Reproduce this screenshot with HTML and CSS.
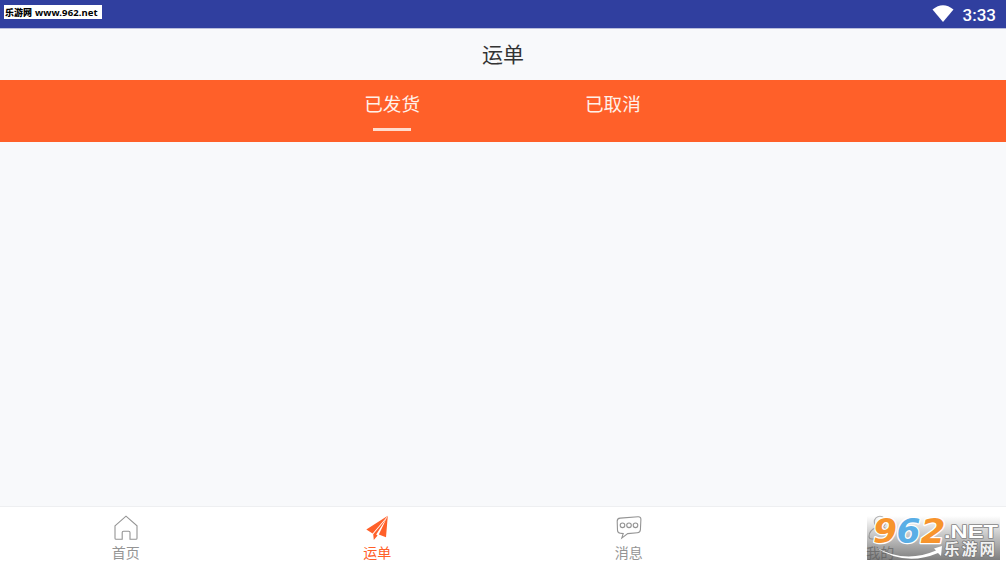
FILE: index.html
```
<!DOCTYPE html>
<html lang="zh-CN">
<head>
    <meta charset="UTF-8">
    <meta name="viewport" content="width=device-width, initial-scale=1.0">
    <title>运单</title>
    <link rel="stylesheet" href="styles.css">
</head>
<body>
    <div class="status-bar">
        <div class="site-tag"><span class="site-name">乐游网</span><span>www.962.net</span></div>
        <div class="status-right">
            <svg class="wifi" viewBox="0 0 22 18"><path d="M0.5 4.5Q11-4 21.5 4.5L11 17Z" fill="#fff"/></svg>
            <span class="clock">3:33</span>
        </div>
    </div>

    <h1 class="title">运单</h1>

    <div class="tabs">
        <a class="tab active">已发货</a>
        <a class="tab">已取消</a>
    </div>

    <div class="content"></div>

    <div class="nav">
        <a class="nav-item">
            <svg class="icon" viewBox="0 0 26 26"><path d="M2 10.8 13 1.2 24 10.8V23.2Q24 24.3 22.9 24.3H17V17.5Q17 16.2 15.7 16.2H10.5Q9.2 16.2 9.2 17.5V24.3H3.1Q2 24.3 2 23.2Z"/></svg>
            <span>首页</span>
        </a>
        <a class="nav-item active">
            <svg class="icon" viewBox="0 0 26 26"><path d="M23.8 0.8 2.3 14.6 8.6 18.4ZM23.8 0.8 22 22.2 14.8 19.6ZM22.4 3.6 9.2 19.2 9.8 25 13.6 20.4 12.2 19.6Z"/></svg>
            <span>运单</span>
        </a>
        <a class="nav-item">
            <svg class="icon" viewBox="0 0 26 26"><path d="M4.2 3.1 22 1.7Q25 1.5 24.9 4.5L24.4 14.7Q24.2 17.6 21.4 17.8L11.7 18.6 5.8 23.1 7.2 18.6 4.4 18.3Q1.6 18 1.5 15.3L1.2 6.3Q1.1 3.4 4.2 3.1Z"/><circle cx="6.5" cy="10.3" r="2.3"/><circle cx="13" cy="10.3" r="2.3"/><circle cx="19.5" cy="10.3" r="2.3"/></svg>
            <span>消息</span>
        </a>
        <a class="nav-item">
            <svg class="icon faint" viewBox="0 0 26 26"><circle cx="13" cy="7" r="5.7"/><path d="M9.5 12.3Q2 15.4 2 21.5 2 24 5 24H21Q24 24 24 21.5 24 15.4 16.5 12.3"/></svg>
            <span>我的</span>
        </a>
    </div>

    <div class="watermark">
        <svg viewBox="0 0 133 44">
            <path class="swoosh" d="M8 31Q38 48 69 34.5L67 32.5 75 30 74 40 71 37Q38 51 8 31Z"/>
            <g class="digits">
                <text x="6" y="27" textLength="24" lengthAdjust="spacingAndGlyphs" fill="#f7942c">9</text>
                <text x="29.5" y="27" textLength="24" lengthAdjust="spacingAndGlyphs" fill="#5aaee6">6</text>
                <text x="53.5" y="27" textLength="25" lengthAdjust="spacingAndGlyphs" fill="#f7942c">2</text>
            </g>
            <text class="domain" x="77" y="21.5" textLength="54" lengthAdjust="spacingAndGlyphs">.NET</text>
            <text class="brand" x="77" y="39" textLength="51">乐游网</text>
        </svg>
    </div>
</body>
</html>
```
FILE: styles.css
```
* {
    box-sizing: border-box;
}
body {
    margin: 0;
    height: 100vh;
    display: flex;
    flex-direction: column;
    overflow: hidden;
    background-color: #f8f9fb;
    font-family: "Noto Sans CJK SC", sans-serif;
}

/* Status bar */
.status-bar {
    height: 28px;
    flex: none;
    display: flex;
    justify-content: space-between;
    align-items: flex-start;
    padding: 5px 10px 0 4px;
    background-color: #303f9f;
    box-shadow: 0 1px 0 #b9bddc;
}
.site-tag {
    width: 98px;
    height: 14px;
    display: flex;
    gap: 3px;
    padding-left: 1px;
    background-color: #fff;
    color: #000;
    font: bold 9.5px/15px "Noto Sans", "Noto Sans CJK SC", sans-serif;
    letter-spacing: 0.1px;
    white-space: nowrap;
}
.site-name {
    font-family: "Noto Sans CJK SC", sans-serif;
    font-weight: 900;
    font-size: 9px;
    letter-spacing: 0;
}
.status-right {
    display: flex;
    gap: 9px;
    color: #fff;
}
.wifi {
    width: 22px;
    height: 18px;
}
.clock {
    font: 500 17px/20px Roboto, sans-serif;
}

/* Header */
.title {
    height: 52px;
    flex: none;
    margin: 0;
    color: #333;
    text-align: center;
    font-size: 21px;
    font-weight: 400;
    line-height: 51px;
}

/* Tabs */
.tabs {
    height: 62px;
    flex: none;
    display: flex;
    justify-content: center;
    gap: 165px;
    padding-right: 1px;
    background-color: #ff6029;
}
.tab {
    display: flex;
    flex-direction: column;
    align-items: center;
    color: #fff1ea;
    font-size: 18.6px;
    font-weight: 400;
    line-height: 46px;
}
.tab.active::after {
    content: "";
    width: 38px;
    height: 3px;
    margin-top: 2px;
    background-color: #ffdccd;
}

.content {
    flex: 1;
}

/* Bottom navigation */
.nav {
    height: 60px;
    flex: none;
    display: flex;
    border-top: 1px solid #eeeff1;
    background-color: #fff;
}
.nav-item {
    flex: 1;
    display: flex;
    flex-direction: column;
    align-items: center;
    padding-top: 8px;
    color: #949494;
    font-size: 14px;
    line-height: 20px;
}
.nav-item.active {
    color: #ff6029;
}
.icon {
    width: 26px;
    height: 26px;
    margin-bottom: 1px;
    fill: none;
    stroke: currentColor;
    stroke-width: 1.1;
}
.icon.faint {
    stroke: #b5b5b5;
}
.nav-item.active .icon {
    fill: currentColor;
    stroke: none;
}

/* Watermark */
.watermark {
    position: absolute;
    right: 6px;
    bottom: 6px;
    width: 133px;
    height: 44px;
    background: linear-gradient(rgba(90, 90, 90, 0), rgba(90, 90, 90, 0.78));
}
.watermark svg {
    display: block;
    width: 133px;
    height: 44px;
}
.watermark text {
    paint-order: stroke;
    stroke-linejoin: round;
}
.digits {
    font: italic bold 33px "DejaVu Sans", sans-serif;
    stroke: #fff;
    stroke-width: 2.5px;
}
.domain {
    font: bold 19px "Liberation Sans", sans-serif;
    fill: #fff;
    stroke: #858585;
    stroke-width: 1.5px;
}
.brand {
    font: bold 15.5px "Noto Sans CJK SC", sans-serif;
    fill: #f2f2f2;
    stroke: #777;
    stroke-width: 1.5px;
}
.swoosh {
    fill: #fff;
}
```
